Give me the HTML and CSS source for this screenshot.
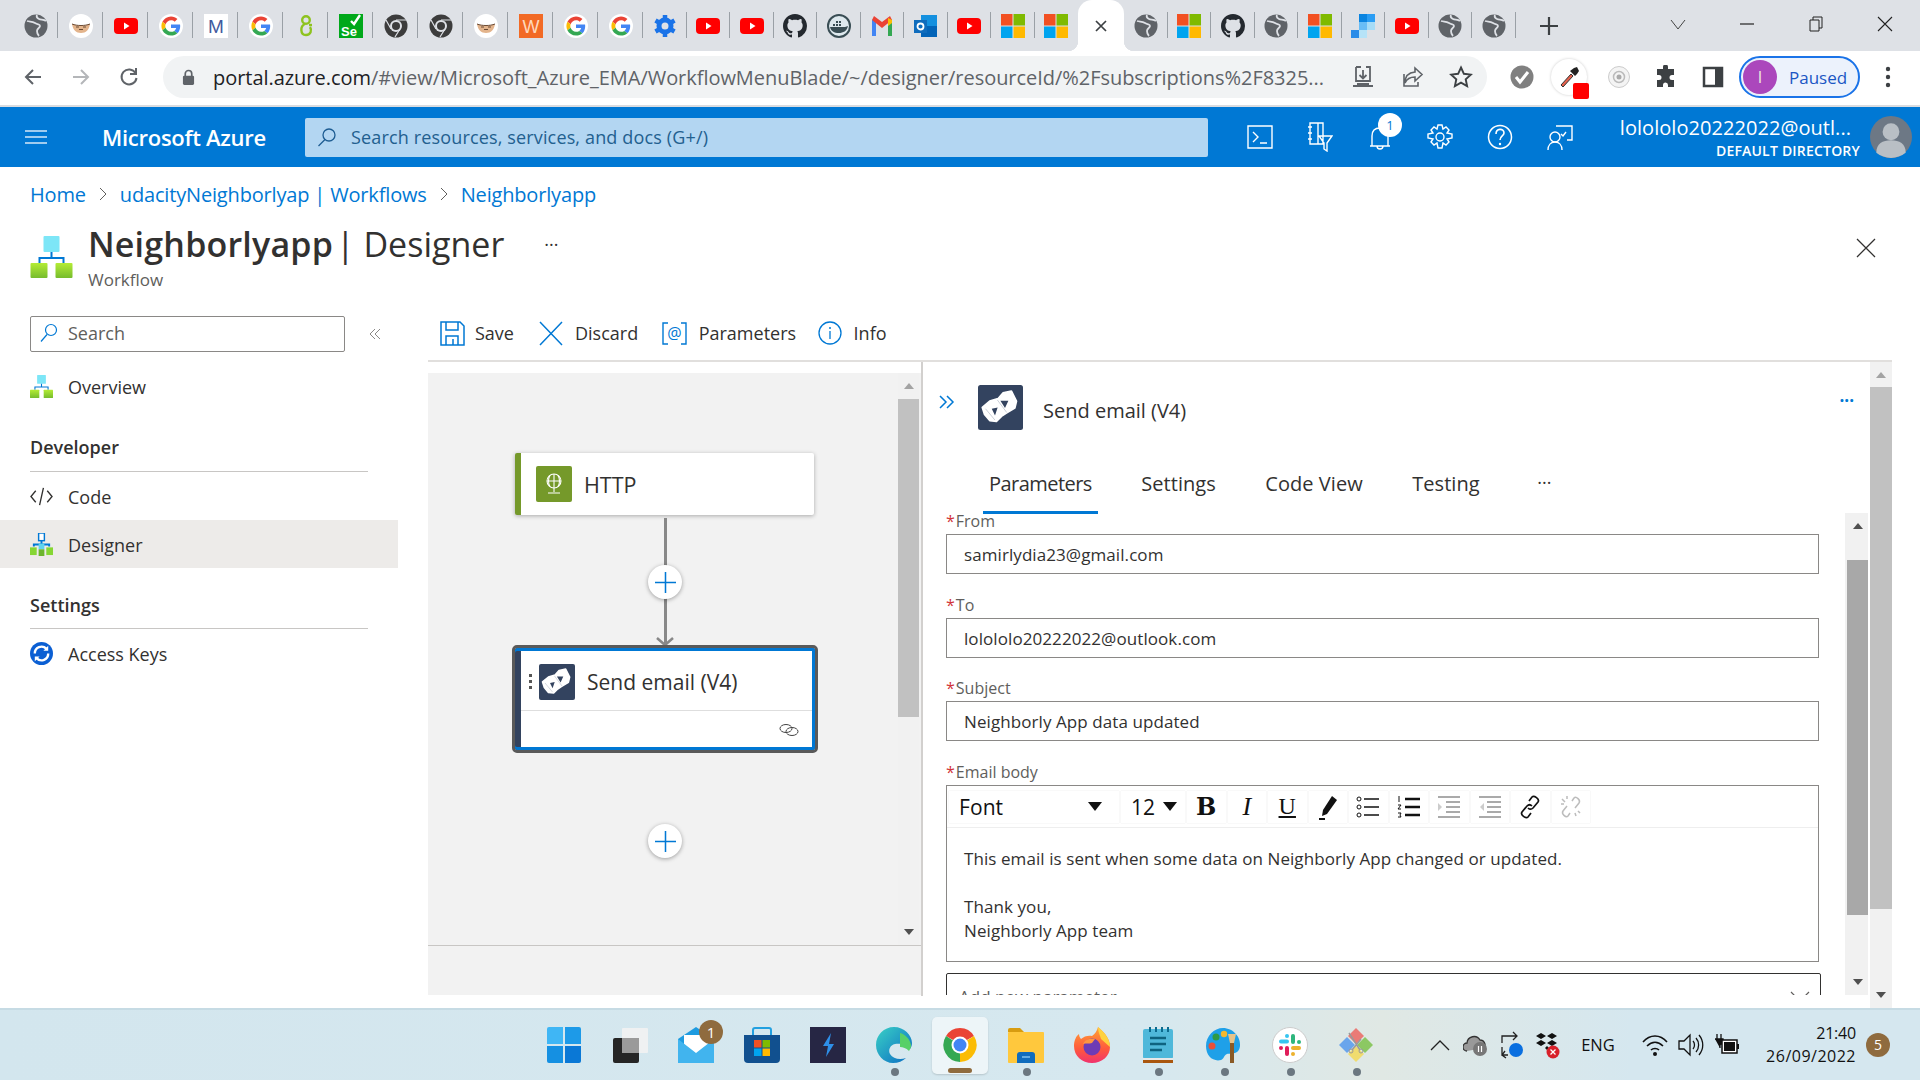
FILE: index.html
```html
<!DOCTYPE html>
<html lang="en">
<head>
  <meta charset="UTF-8">
  <title>Neighborlyapp | Designer - Microsoft Azure</title>
  <link rel="stylesheet" href="styles.css">
</head>
<body>
  <svg class="sprite" aria-hidden="true">
    <defs>
      <symbol id="globe" viewBox="0 0 24 24"><circle cx="12" cy="12" r="11.5" fill="#5f6368"/><path d="M3 7c3 1 5 0 8 2s5 1 5 3-3 2-3 5 1 4 2 5M13 1c-1 2 0 3 2 4s5 0 7 2" fill="none" stroke="#dee1e6" stroke-width="1.800"/></symbol>
      <symbol id="face" viewBox="0 0 24 24"><circle cx="12" cy="12" r="12" fill="#fff"/><path d="M3 10c5 2 13 2 18 0-1 6-4 9-9 9s-8-3-9-9z" fill="#e3b48c"/><path d="M3 10c5 2 13 2 18 0" fill="none" stroke="#6b4a33" stroke-width="1"/><path d="M7 13h3M14 13h3M10 15.500h4" stroke="#6b4a33" stroke-width="1"/></symbol>
      <symbol id="yt" viewBox="0 0 24 24"><rect y="4" width="24" height="16" rx="4" fill="#f00"/><path d="M10 8.500l5.500 3.500-5.500 3.500z" fill="#fff"/></symbol>
      <symbol id="google" viewBox="-6 -6 60 60"><circle cx="24" cy="24" r="30" fill="#fff"/><path fill="#EA4335" d="M24 9.500c3.540 0 6.710 1.220 9.210 3.600l6.850-6.850C35.900 2.380 30.470 0 24 0 14.620 0 6.510 5.380 2.560 13.220l7.980 6.190C12.430 13.720 17.740 9.500 24 9.500z"/><path fill="#4285F4" d="M46.980 24.550c0-1.570-.15-3.090-.38-4.550H24v9.020h12.940c-.58 2.960-2.260 5.480-4.780 7.180l7.730 6c4.510-4.180 7.090-10.360 7.090-17.650z"/><path fill="#FBBC05" d="M10.530 28.590c-.48-1.450-.76-2.990-.76-4.590s.27-3.140.76-4.590l-7.980-6.190C.92 16.460 0 20.120 0 24c0 3.880.92 7.540 2.560 10.780l7.970-6.190z"/><path fill="#34A853" d="M24 48c6.480 0 11.930-2.130 15.890-5.810l-7.730-6c-2.150 1.450-4.920 2.300-8.160 2.300-6.260 0-11.570-4.220-13.470-9.910l-7.980 6.190C6.510 42.620 14.620 48 24 48z"/></symbol>
      <symbol id="fav-m" viewBox="0 0 24 24"><rect width="24" height="24" fill="#fff"/><text x="12" y="19" text-anchor="middle" font-family="Liberation Sans" font-size="19" fill="#3f5a9e">M</text></symbol>
      <symbol id="leaf" viewBox="0 0 24 24"><g fill="none" stroke="#8ec31f" stroke-width="2.400"><circle cx="12" cy="6" r="3.800"/><path d="M11 10c-5 2-5 11 1 11 5 0 6-5 4-8"/><path d="M15 11h3"/></g></symbol>
      <symbol id="se" viewBox="0 0 24 24"><rect width="24" height="24" fill="#00a81a"/><path d="M12 7l3 3 6-9" fill="none" stroke="#fff" stroke-width="2.400"/><text x="2" y="22" font-family="Liberation Sans" font-weight="700" font-size="13" fill="#fff">Se</text></symbol>
      <symbol id="chrome-grey" viewBox="0 0 24 24"><circle cx="12" cy="12" r="11.500" fill="#3c3c3c"/><circle cx="12" cy="12" r="6" fill="#dee1e6"/><circle cx="12" cy="12" r="4" fill="#3c3c3c"/><path d="M12 6h10M7 15L2 6M16 15l-5 8" stroke="#dee1e6" stroke-width="1.200"/></symbol>
      <symbol id="fav-w" viewBox="0 0 24 24"><rect width="24" height="24" fill="#f26a25"/><text x="12" y="19" text-anchor="middle" font-family="Liberation Sans" font-size="18" fill="#ffd9bd">W</text></symbol>
      <symbol id="gear-blue" viewBox="0 0 24 24"><circle cx="12" cy="12" r="6" fill="none" stroke="#1a73e8" stroke-width="5"/><path d="M12 1v5M12 18v5M2.500 6.500l4.300 2.500M17.200 15l4.300 2.500M2.500 17.500L6.800 15M17.200 9l4.300-2.500" stroke="#1a73e8" stroke-width="4.500"/></symbol>
      <symbol id="github" viewBox="0 0 16 16"><path fill="#24292f" d="M8 0C3.580 0 0 3.580 0 8c0 3.540 2.290 6.530 5.470 7.590.4.070.55-.17.55-.38 0-.19-.01-.82-.01-1.490-2.010.37-2.530-.49-2.690-.94-.09-.23-.48-.94-.82-1.130-.28-.15-.68-.52-.01-.53.63-.01 1.080.58 1.230.82.72 1.210 1.870.87 2.330.66.070-.52.28-.87.51-1.070-1.780-.2-3.640-.89-3.640-3.950 0-.87.31-1.590.82-2.150-.08-.2-.36-1.020.08-2.120 0 0 .67-.21 2.200.82.64-.18 1.320-.27 2-.27.68 0 1.360.09 2 .27 1.530-1.040 2.200-.82 2.200-.82.44 1.100.16 1.920.08 2.120.51.56.82 1.270.82 2.150 0 3.070-1.870 3.750-3.650 3.950.29.25.54.73.54 1.480 0 1.070-.01 1.930-.01 2.200 0 .21.15.46.55.38A8.013 8.013 0 0016 8c0-4.420-3.580-8-8-8z"/></symbol>
      <symbol id="docker" viewBox="0 0 24 24"><circle cx="12" cy="12" r="11" fill="#dee9ee" stroke="#394d54" stroke-width="2"/><path d="M3 13h15c1 0 2-1 3-1-1 5-5 7-9 7-5 0-8-2-9-6z" fill="#394d54"/><path d="M6 10h2v2H6zM9 10h2v2H9zM12 10h2v2h-2zM9 7h2v2H9zM12 7h2v2h-2z" fill="#394d54"/></symbol>
      <symbol id="gmail" viewBox="0 0 24 24"><path d="M2 22V6l4-2v18z" fill="#4285f4"/><path d="M18 22V4l4 2v16z" fill="#34a853"/><path d="M2 6l10 8 10-8-2-4-8 6-8-6z" fill="#ea4335"/><path d="M18 4l4 2v3l-4 3z" fill="#fbbc05"/></symbol>
      <symbol id="outlook" viewBox="0 0 24 24"><rect x="7" y="1" width="16" height="22" fill="#1490df"/><path d="M7 12h16v11H7z" fill="#0364b8"/><rect x="0" y="6" width="13" height="13" fill="#0f6cbd"/><circle cx="6.500" cy="12.500" r="3" fill="none" stroke="#fff" stroke-width="1.800"/></symbol>
      <symbol id="ms" viewBox="0 0 24 24"><path d="M0 0h11.500v11.500H0z" fill="#f25022"/><path d="M12.500 0H24v11.500H12.500z" fill="#7fba00"/><path d="M0 12.500h11.500V24H0z" fill="#00a4ef"/><path d="M12.500 12.500H24V24H12.500z" fill="#ffb900"/></symbol>
      <symbol id="squares" viewBox="0 0 24 24"><path d="M8 0h8v8H8z" fill="#0a84e0"/><path d="M16 0h8v8h-8z" fill="#2a9df4"/><path d="M8 8h8v8H8z" fill="#68bdf6"/><path d="M16 8h8v8h-8z" fill="#a6dcf7"/><path d="M0 16h8v8H0z" fill="#2a8ce8"/><path d="M8 16h8v8H8z" fill="#b6e3f8"/></symbol>

      <symbol id="workflow" viewBox="0 0 42 42"><defs><linearGradient id="wf-g" x1="0" y1="0" x2="0" y2="1"><stop offset="0" stop-color="#b4ec36"/><stop offset="1" stop-color="#76bc2d"/></linearGradient></defs><rect x="13" y="0" width="16" height="16" rx="1" fill="#7de6f7"/><path d="M21 16v6M9 27v-5h24v5" fill="none" stroke="#0078d4" stroke-width="2"/><rect x="0" y="27" width="17" height="15" rx="1" fill="url(#wf-g)"/><rect x="25" y="27" width="17" height="15" rx="1" fill="url(#wf-g)"/></symbol>
      <symbol id="designer" viewBox="0 0 24 24"><rect x="9" y="0" width="6" height="8" fill="#fff" stroke="#0078d4" stroke-width="1.500"/><path d="M12 8v4M4 14v-2h16v2" fill="none" stroke="#0078d4" stroke-width="2"/><path d="M9 11h6v6H9z" fill="#5fd4ee"/><rect x="0" y="15" width="7" height="8" fill="#86d633"/><rect x="17" y="15" width="7" height="8" fill="#86d633"/><rect x="9" y="17" width="6" height="7" fill="#6cb52d"/></symbol>
      <symbol id="mail-logo" viewBox="0 0 36 36"><rect width="36" height="36" rx="2" fill="#33435f"/><path d="M3.500 17.900L9.400 13 16 11l4-4.600L26.700 5l4 8-1.300 5.400-6.700 4-4 2.600-4 4-5.300-.6-4.100-4.800z" fill="#fff" stroke="#fff" stroke-width="1.500" stroke-linejoin="round"/><path d="M11 19l2.600 5.300 2.100-6.400zM17.900 12.500l3.700 5.900 2.700-5.900z" fill="#33435f"/><path d="M6 19l7.500 9M15.500 12l7.500 10" stroke="#c3c9d2" stroke-width=".7" fill="none"/></symbol>

      <symbol id="win" viewBox="0 0 36 36"><path d="M1 2a2 2 0 012-2h14v17H1z" fill="#3fb6f5"/><path d="M19 0h14a2 2 0 012 2v15H19z" fill="#1d9ae8"/><path d="M1 19h16v17H3a2 2 0 01-2-2z" fill="#1590e2"/><path d="M19 19h16v15a2 2 0 01-2 2H19z" fill="#0a78d6"/></symbol>
      <symbol id="taskview" viewBox="0 0 36 36"><rect x="1" y="11" width="26" height="25" rx="2" fill="#252525"/><rect x="10" y="1" width="26" height="25" rx="1" fill="#f2f2f2" opacity=".9"/><rect x="10" y="11" width="17" height="15" fill="#9a9a9a"/></symbol>
      <symbol id="mail-task" viewBox="0 0 36 36"><path d="M0 12L18 0l18 12v24H0z" fill="#1d9be0"/><path d="M6 8h24v14l-12 7-12-7z" fill="#fff"/><path d="M0 12l18 14 18-14v24H0z" fill="#41b4ee"/></symbol>
      <symbol id="store" viewBox="0 0 36 36"><path d="M9 8V3a2 2 0 012-2h14a2 2 0 012 2v5" fill="none" stroke="#22a0e0" stroke-width="2"/><path d="M0 8h36v24a4 4 0 01-4 4H4a4 4 0 01-4-4z" fill="#11508f"/><path d="M10 13h7.500v7.500H10z" fill="#f25022"/><path d="M18.500 13H26v7.500h-7.500z" fill="#7fba00"/><path d="M10 21.500h7.500V29H10z" fill="#00a4ef"/><path d="M18.500 21.500H26V29h-7.500z" fill="#ffb900"/></symbol>
      <symbol id="bolt" viewBox="0 0 36 36"><rect width="36" height="36" fill="#262644"/><path d="M21 6l-8 13h5l-2 11 8-13h-5z" fill="#2e8fe8"/></symbol>
      <symbol id="edge" viewBox="0 0 36 36"><defs><linearGradient id="edge-g" x1="0" y1="0" x2="1" y2="1"><stop offset="0" stop-color="#3ad1c5"/><stop offset="1" stop-color="#0a6bc4"/></linearGradient></defs><path d="M18 0C8 0 0 8 0 18c0 10 8 18 17 18 5 0 10-2 13-5-6 2-13 1-16-4-2-4 0-9 5-10 6-1 12 1 15 5 1-2 2-3 2-6C36 8 28 0 18 0z" fill="url(#edge-g)"/><path d="M24 6c5 1 10 6 11 12 0 3-1 4-2 6-3-3-6-4-9-4z" fill="#57d068"/></symbol>
      <symbol id="chrome" viewBox="0 0 36 36"><path d="M18 18L4.100 10A16 16 0 0131.900 10z" fill="#ea4335" transform="translate(0 -1)"/><path d="M18 18L32 9A17 17 0 0118 35z" fill="#fbbc05"/><path d="M18 18L18 35A17 17 0 014 9z" fill="#34a853"/><circle cx="18" cy="18" r="8.500" fill="#fff"/><circle cx="18" cy="18" r="6.500" fill="#4285f4"/></symbol>
      <symbol id="folder" viewBox="0 0 36 36"><path d="M0 3a2 2 0 012-2h10l4 4h-16z" fill="#d89c10"/><rect y="5" width="36" height="31" rx="1" fill="#ffc83d"/><path d="M9 36v-8a3 3 0 013-3h12a3 3 0 013 3v8z" fill="#0f6cbd"/><path d="M14 30h8" stroke="#7fc1ef" stroke-width="1.500"/></symbol>
      <symbol id="firefox" viewBox="0 0 36 36"><defs><linearGradient id="ff-g" x1="0" y1="0" x2="0" y2="1"><stop offset="0" stop-color="#ffa436"/><stop offset=".6" stop-color="#ff5a3c"/><stop offset="1" stop-color="#f0336e"/></linearGradient></defs><path d="M24 0c7 6 12 12 12 20 0 9-8 16-18 16S0 29 0 19C0 14 2 9 5 7c0 2 1 4 2 5 3-3 8-4 11-3 3-2 5-5 6-9z" fill="url(#ff-g)"/><path d="M24 0c7 6 12 12 12 20l-9-8c-1-4-3-7-3-12z" fill="#ffd23f"/><circle cx="18" cy="20" r="8.500" fill="#6e3bb5"/><path d="M9 17c2-5 7-6 12-5l-3 4c-3 1-6 0-9 1z" fill="#ff9640"/></symbol>
      <symbol id="notes" viewBox="0 0 36 36"><rect x="3" y="2" width="30" height="30" rx="2" fill="#4fb8da"/><path d="M3 31h30v2H3z" fill="#e8e8e8"/><path d="M3 33h30v3H3z" fill="#a9570f"/><path d="M10 0v5M16 0v5M22 0v5M28 0v5" stroke="#0c6a8e" stroke-width="2"/><path d="M10 11h16M10 17h16M10 23h12" stroke="#0e6380" stroke-width="2.500"/></symbol>
      <symbol id="paint" viewBox="0 0 36 36"><path d="M17 1C8 1 0 9 0 19s7 16 15 14c3-1 3-5 6-6 4-1 12 1 13-8C35 10 27 1 17 1z" fill="#1fa0e8"/><circle cx="6" cy="19" r="3.500" fill="#e8503a"/><circle cx="10" cy="10" r="3.500" fill="#2e9a46"/><circle cx="18" cy="7" r="3.200" fill="#f5b82e"/><rect x="24" y="15" width="4" height="21" fill="#8a5a26"/><path d="M22 7h8l-2 9h-4z" fill="#e8c48a"/></symbol>
      <symbol id="slack" viewBox="0 0 36 36"><circle cx="18" cy="18" r="17.500" fill="#fff" stroke="#ccc"/><rect x="7" y="12.500" width="10" height="4" rx="2" fill="#36c5f0"/><rect x="13" y="7" width="4" height="4" rx="2" fill="#36c5f0"/><rect x="19" y="7" width="4" height="10" rx="2" fill="#2eb67d"/><rect x="25" y="13" width="4" height="4" rx="2" fill="#2eb67d"/><rect x="13" y="19" width="4" height="10" rx="2" fill="#e01e5a"/><rect x="7" y="19" width="4" height="4" rx="2" fill="#e01e5a"/><rect x="19" y="19" width="10" height="4" rx="2" fill="#ecb22e"/><rect x="19" y="25" width="4" height="4" rx="2" fill="#ecb22e"/></symbol>
      <symbol id="snip" viewBox="0 0 36 36"><path d="M18 1l8 8-8 8-8-8z" fill="#ea7b76"/><path d="M9 10l8 8-8 8-8-8z" fill="#6aa5ec"/><path d="M27 10l8 8-8 8-8-8z" fill="#8cc863"/><path d="M18 19l8 8-8 8-8-8z" fill="#f0dc6e"/><path d="M11 6l11 17M23 12L14 23" stroke="#9a9a9a" stroke-width="1.500"/><circle cx="23" cy="24" r="2" fill="none" stroke="#9a9a9a"/><circle cx="13" cy="24" r="2" fill="none" stroke="#9a9a9a"/></symbol>
    </defs>
  </svg>

  <div class="tabstrip">
    <div class="tab"><svg class="fav"><use href="#globe"/></svg></div>
    <div class="tab"><svg class="fav"><use href="#face"/></svg></div>
    <div class="tab"><svg class="fav"><use href="#yt"/></svg></div>
    <div class="tab"><svg class="fav"><use href="#google"/></svg></div>
    <div class="tab"><svg class="fav"><use href="#fav-m"/></svg></div>
    <div class="tab"><svg class="fav"><use href="#google"/></svg></div>
    <div class="tab"><svg class="fav"><use href="#leaf"/></svg></div>
    <div class="tab"><svg class="fav"><use href="#se"/></svg></div>
    <div class="tab"><svg class="fav"><use href="#chrome-grey"/></svg></div>
    <div class="tab"><svg class="fav"><use href="#chrome-grey"/></svg></div>
    <div class="tab"><svg class="fav"><use href="#face"/></svg></div>
    <div class="tab"><svg class="fav"><use href="#fav-w"/></svg></div>
    <div class="tab"><svg class="fav"><use href="#google"/></svg></div>
    <div class="tab"><svg class="fav"><use href="#google"/></svg></div>
    <div class="tab"><svg class="fav"><use href="#gear-blue"/></svg></div>
    <div class="tab"><svg class="fav"><use href="#yt"/></svg></div>
    <div class="tab"><svg class="fav"><use href="#yt"/></svg></div>
    <div class="tab"><svg class="fav"><use href="#github"/></svg></div>
    <div class="tab"><svg class="fav"><use href="#docker"/></svg></div>
    <div class="tab"><svg class="fav"><use href="#gmail"/></svg></div>
    <div class="tab"><svg class="fav"><use href="#outlook"/></svg></div>
    <div class="tab"><svg class="fav"><use href="#yt"/></svg></div>
    <div class="tab"><svg class="fav"><use href="#ms"/></svg></div>
    <div class="tab tab-last"><svg class="fav"><use href="#ms"/></svg></div>
    <div class="tab-active"><svg width="14" height="14" viewBox="0 0 14 14"><path d="M2 2l10 10M12 2L2 12" stroke="#3c4043" stroke-width="1.700"/></svg></div>
    <div class="tab"><svg class="fav"><use href="#globe"/></svg></div>
    <div class="tab"><svg class="fav"><use href="#ms"/></svg></div>
    <div class="tab"><svg class="fav"><use href="#github"/></svg></div>
    <div class="tab"><svg class="fav"><use href="#globe"/></svg></div>
    <div class="tab"><svg class="fav"><use href="#ms"/></svg></div>
    <div class="tab"><svg class="fav"><use href="#squares"/></svg></div>
    <div class="tab"><svg class="fav"><use href="#yt"/></svg></div>
    <div class="tab"><svg class="fav"><use href="#globe"/></svg></div>
    <div class="tab"><svg class="fav"><use href="#globe"/></svg></div>
    <div class="newtab"><svg width="20" height="20" viewBox="0 0 20 20"><path d="M10 1v18M1 10h18" stroke="#3c4043" stroke-width="2.200"/></svg></div>
    <div class="winctl">
      <svg width="16" height="16" viewBox="0 0 16 16"><path d="M1 4l7 9 7-9" fill="none" stroke="#444" stroke-width="1"/></svg>
      <svg width="16" height="16" viewBox="0 0 16 16"><path d="M1 8h14" stroke="#222" stroke-width="1.200"/></svg>
      <svg width="16" height="16" viewBox="0 0 16 16"><path d="M2 4h9v11H2zM5 4V1h9v11h-3" fill="none" stroke="#222" stroke-width="1"/></svg>
      <svg width="16" height="16" viewBox="0 0 16 16"><path d="M1 1l14 14M15 1L1 15" stroke="#222" stroke-width="1.100"/></svg>
    </div>
  </div>

  <div class="addressbar">
    <svg class="nav" viewBox="0 0 20 20"><path d="M18 10H3M10 3l-7 7 7 7" fill="none" stroke="#5f6368" stroke-width="2"/></svg>
    <svg class="nav" viewBox="0 0 20 20"><path d="M2 10h15M10 3l7 7-7 7" fill="none" stroke="#b4b6b9" stroke-width="2"/></svg>
    <svg class="nav" viewBox="0 0 20 20"><path d="M16.500 6A7.500 7.500 0 1017.500 11M17 1v6h-6" fill="none" stroke="#5f6368" stroke-width="2"/></svg>
    <div class="omnibox">
      <svg class="lock" viewBox="0 0 14 18"><path d="M3.500 8V5a3.500 3.500 0 017 0v3" fill="none" stroke="#5f6368" stroke-width="1.800"/><rect x="1" y="7" width="12" height="10" rx="1.500" fill="#5f6368"/></svg>
      <span class="url"><b>portal.azure.com</b>/#view/Microsoft_Azure_EMA/WorkflowMenuBlade/~/designer/resourceId/%2Fsubscriptions%2F8325...</span>
      <svg class="omni-ico" viewBox="0 0 24 24"><path d="M5 2h5M15 2h4v14H5V2M12 5v8M8.500 10l3.500 3.500 3.500-3.500M2 21h20M6 19h12" fill="none" stroke="#5f6368" stroke-width="1.800"/></svg>
      <svg class="omni-ico" viewBox="0 0 24 24"><path d="M15 3l7 6.500L15 16v-4c-5 0-8 1.500-10 6 0-7 4-10.500 10-11zM4 9v12h14v-4" fill="none" stroke="#5f6368" stroke-width="1.600"/></svg>
      <svg class="omni-ico" viewBox="0 0 24 24"><path d="M12 2.500l2.900 6.300 6.900.8-5.100 4.700 1.400 6.800-6.100-3.400-6.100 3.400 1.400-6.800-5.100-4.700 6.900-.8z" fill="none" stroke="#3c4043" stroke-width="1.900"/></svg>
    </div>
    <svg class="ext" viewBox="0 0 24 24"><circle cx="12" cy="12" r="11.500" fill="#808080"/><path d="M6 12l4 5 8-10" fill="none" stroke="#fff" stroke-width="3"/></svg>
    <div class="ext ext-drop">
      <svg width="24" height="24" viewBox="0 0 24 24"><path d="M4 20l10-11 2 2L6 22z" fill="#e5604c" stroke="#333"/><path d="M13 6l5 5 2-2 2-3-2-4-3 1z" fill="#222"/></svg>
      <span class="drop-red"></span>
    </div>
    <svg class="ext" viewBox="0 0 24 24"><circle cx="12" cy="12" r="10.500" fill="#f4f4f4" stroke="#ccc"/><circle cx="12" cy="12" r="5.500" fill="none" stroke="#bbb" stroke-width="1.500"/><circle cx="12" cy="12" r="2.500" fill="#aaa"/></svg>
    <svg class="ext" viewBox="0 0 24 24"><path d="M9 2a2.500 2.500 0 015 0v2h6v6h-2a2.500 2.500 0 000 5h2v7h-6v-2a2.500 2.500 0 00-5 0v2H3v-7h2a2.500 2.500 0 000-5H3V4h6z" fill="#3c4043"/></svg>
    <svg class="ext" viewBox="0 0 24 24"><path d="M3 3h18v18H3z" fill="none" stroke="#3c4043" stroke-width="2.500"/><path d="M14 3h7v18h-7z" fill="#3c4043"/></svg>
    <div class="chip"><span class="chip-avatar">I</span><span>Paused</span></div>
    <svg class="more" viewBox="0 0 6 24"><circle cx="3" cy="4" r="2.200" fill="#3c4043"/><circle cx="3" cy="12" r="2.200" fill="#3c4043"/><circle cx="3" cy="20" r="2.200" fill="#3c4043"/></svg>
  </div>

  <header class="azure-bar">
    <div class="burger"><svg width="22" height="16" viewBox="0 0 22 16"><path d="M0 2h22M0 8h22M0 14h22" stroke="#d5e8f7" stroke-width="1.600"/></svg></div>
    <div class="brand">Microsoft Azure</div>
    <div class="global-search">
      <svg width="20" height="20" viewBox="0 0 20 20"><circle cx="12" cy="8" r="6" fill="none" stroke="#1d5c92" stroke-width="1.300"/><path d="M8 12.500L1.500 19" stroke="#1d5c92" stroke-width="1.300"/></svg>
      <span>Search resources, services, and docs (G+/)</span>
    </div>
    <div class="bar-ico"><svg width="26" height="26" viewBox="0 0 26 26"><path d="M1 2h24v22H1z" fill="none" stroke="#fff" stroke-width="1.400"/><path d="M6 8l5 5-5 5M13 19h7" fill="none" stroke="#fff" stroke-width="1.400"/></svg></div>
    <div class="bar-ico"><svg width="26" height="30" viewBox="0 0 26 30"><path d="M3 1h13v21H3zM1 5h4M1 11h4M1 17h4M11 1v21M12 14h13l-5 7v8l-3-2v-6z" fill="none" stroke="#fff" stroke-width="1.400"/></svg></div>
    <div class="bar-ico"><svg width="22" height="30" viewBox="0 0 22 30"><path d="M3 24V14C3 9 6 6 11 6s8 3 8 8v10zM1 24h20M8 24a3 3 0 006 0" fill="none" stroke="#fff" stroke-width="1.400"/></svg><span class="bell-badge">1</span></div>
    <div class="bar-ico"><svg width="26" height="26" viewBox="0 0 26 26"><circle cx="13" cy="13" r="4" fill="none" stroke="#fff" stroke-width="1.400"/><path d="M11 1h4l1 4 3-2 3 3-2 3 5 1v4l-5 1 2 3-3 3-3-2-1 5h-4l-1-5-3 2-3-3 2-3-5-1v-4l5-1-2-3 3-3 3 2z" fill="none" stroke="#fff" stroke-width="1.400"/></svg></div>
    <div class="bar-ico"><svg width="26" height="26" viewBox="0 0 26 26"><circle cx="13" cy="13" r="11.500" fill="none" stroke="#fff" stroke-width="1.500"/><path d="M9 10c0-6 8-6 8-1 0 3-4 3-4 7" fill="none" stroke="#fff" stroke-width="1.600"/><circle cx="13" cy="20" r="1.200" fill="#fff"/></svg></div>
    <div class="bar-ico"><svg width="26" height="28" viewBox="0 0 26 28"><path d="M9 3h16v14h-5M14 11l2 2 3-4" fill="none" stroke="#fff" stroke-width="1.400"/><circle cx="8" cy="14" r="5" fill="none" stroke="#fff" stroke-width="1.400"/><path d="M1 27c0-5 3-8 7-8s7 3 7 8" fill="none" stroke="#fff" stroke-width="1.400"/></svg></div>
    <div class="account">
      <div class="account-mail">lolololo20222022@outl...</div>
      <div class="account-dir">DEFAULT DIRECTORY</div>
    </div>
    <svg class="avatar" viewBox="0 0 40 40"><circle cx="20" cy="20" r="20" fill="#6d7885"/><circle cx="20" cy="15" r="8" fill="#b9bfc5"/><path d="M6 35c0-9 6-12 14-12s14 3 14 12c-4 3-9 5-14 5S10 38 6 35z" fill="#b9bfc5"/></svg>
  </header>

  <main class="portal">
    <nav class="crumbs">
      <a>Home</a><svg class="crumb-sep" viewBox="0 0 10 14"><path d="M2 1l6 6-6 6" fill="none" stroke="#605e5c"/></svg>
      <a>udacityNeighborlyap | Workflows</a><svg class="crumb-sep" viewBox="0 0 10 14"><path d="M2 1l6 6-6 6" fill="none" stroke="#605e5c"/></svg>
      <a>Neighborlyapp</a>
    </nav>

    <div class="blade-head">
      <svg class="blade-icon"><use href="#workflow"/></svg>
      <div class="blade-titles">
        <h1><strong>Neighborlyapp</strong> <span>| Designer</span></h1>
        <div class="blade-sub">Workflow</div>
      </div>
      <span class="blade-more">···</span>
      <svg class="blade-close" viewBox="0 0 20 20"><path d="M1 1l18 18M19 1L1 19" stroke="#323130" stroke-width="1.300"/></svg>
    </div>

    <div class="blade-body">
      <aside class="sidebar">
        <div class="side-search-row">
          <div class="side-search">
            <svg width="18" height="20" viewBox="0 0 18 20"><circle cx="11" cy="7" r="5.500" fill="none" stroke="#0078d4" stroke-width="1.200"/><path d="M7 11.500L1 18.500" stroke="#0078d4" stroke-width="1.200"/></svg>
            <span>Search</span>
          </div>
          <svg class="collapse" viewBox="0 0 14 14"><path d="M7 2L2 7l5 5M12 2L7 7l5 5" fill="none" stroke="#8a8886"/></svg>
        </div>
        <a class="side-item side-first"><svg class="side-ico"><use href="#workflow"/></svg>Overview</a>
        <div class="side-group">Developer</div>
        <a class="side-item"><svg class="side-ico" viewBox="0 0 24 24"><path d="M6 6l-5 6 5 6M18 6l5 6-5 6M14 3l-4 18" fill="none" stroke="#323130" stroke-width="1.400"/></svg>Code</a>
        <a class="side-item side-on"><svg class="side-ico"><use href="#designer"/></svg>Designer</a>
        <div class="side-group side-group2">Settings</div>
        <a class="side-item"><svg class="side-ico" viewBox="0 0 24 24"><circle cx="12" cy="12" r="12" fill="#0b5fd3"/><path d="M5 12a7 7 0 0112-5M19 12a7 7 0 01-12 5" fill="none" stroke="#fff" stroke-width="2.500"/><path d="M14 9h5V4zM10 15H5v5z" fill="#fff"/></svg>Access Keys</a>
      </aside>

      <section class="workspace">
        <div class="commands">
          <a class="cmd cmd-save"><svg width="25" height="25" viewBox="0 0 25 25"><path d="M1 1h19l4 4v19H1zM6 1v8h12V1M6 24v-9h12v9M13 18v6" fill="none" stroke="#0078d4" stroke-width="1.500"/></svg>Save</a>
          <a class="cmd"><svg width="24" height="25" viewBox="0 0 24 25"><path d="M1 1l22 23M23 1L1 24" stroke="#0078d4" stroke-width="1.500"/></svg>Discard</a>
          <a class="cmd cmd-params"><svg width="25" height="25" viewBox="0 0 25 25"><path d="M6 2H1v21h5M19 2h5v21h-5" fill="none" stroke="#0078d4" stroke-width="1.400"/><text x="12.500" y="18" text-anchor="middle" font-size="16" font-family="Open Sans" fill="#0078d4">@</text></svg>Parameters</a>
          <a class="cmd"><svg width="24" height="24" viewBox="0 0 24 24"><circle cx="12" cy="12" r="11" fill="none" stroke="#0078d4" stroke-width="1.300"/><path d="M12 10v8" stroke="#0078d4" stroke-width="1.300"/><circle cx="12" cy="7" r="1" fill="#0078d4"/></svg>Info</a>
        </div>

        <div class="split">
          <div class="canvas">
            <div class="canvas-view">
              <div class="diagram">
                <div class="node node-http">
                  <span class="node-logo"><svg width="22" height="24" viewBox="0 0 22 24"><circle cx="11" cy="9" r="7" fill="none" stroke="#fff" stroke-width="1.100"/><path d="M4 9h14M11 2v14M7 3.500c-2 3-2 8 0 11M15 3.500c2 3 2 8 0 11M11 16v4M5 21h12" fill="none" stroke="#fff" stroke-width="1.100"/></svg></span>
                  <span>HTTP</span>
                </div>
                <div class="wire wire-a"></div>
                <div class="wire wire-b"></div>
                <svg class="wire-head" viewBox="0 0 18 10"><path d="M1 1l8 7 8-7" fill="none" stroke="#888" stroke-width="2.500"/></svg>
                <div class="add add-a"><svg viewBox="0 0 22 22"><path d="M11 0v22M0 11h22" stroke="#0078d4" stroke-width="1.600"/></svg></div>
                <div class="node-mail">
                  <div class="node-mail-top">
                    <span class="grip"><i></i><i></i><i></i></span>
                    <svg class="node-mail-logo"><use href="#mail-logo"/></svg>
                    <span>Send email (V4)</span>
                  </div>
                  <div class="node-mail-foot"><svg width="20" height="14" viewBox="0 0 20 14"><ellipse cx="7" cy="5.500" rx="6" ry="4" fill="none" stroke="#444" stroke-width="1"/><ellipse cx="13" cy="8.500" rx="6" ry="4" fill="none" stroke="#444" stroke-width="1"/></svg></div>
                </div>
                <div class="add add-b"><svg viewBox="0 0 22 22"><path d="M11 0v22M0 11h22" stroke="#0078d4" stroke-width="1.600"/></svg></div>
              </div>
              <div class="vscroll canvas-scroll">
                <span class="sb-up"></span><span class="sb-thumb"></span><span class="sb-fill"></span><span class="sb-down"></span>
              </div>
            </div>
          </div>

          <div class="panel">
            <div class="panel-main">
              <div class="panel-head">
                <svg class="panel-collapse" viewBox="0 0 18 14"><path d="M2 1l6 6-6 6M9 1l6 6-6 6" fill="none" stroke="#0078d4" stroke-width="1.500"/></svg>
                <svg class="panel-logo"><use href="#mail-logo"/></svg>
                <span class="panel-title">Send email (V4)</span>
                <span class="panel-more">···</span>
              </div>
              <div class="panel-tabs">
                <span class="ptab ptab-on">Parameters</span>
                <span class="ptab">Settings</span>
                <span class="ptab">Code View</span>
                <span class="ptab">Testing</span>
                <span class="ptab-more">···</span>
              </div>
              <div class="form-wrap">
                <div class="form">
                  <label class="lbl"><em>*</em>From</label>
                  <div class="input">samirlydia23@gmail.com</div>
                  <label class="lbl"><em>*</em>To</label>
                  <div class="input">lolololo20222022@outlook.com</div>
                  <label class="lbl"><em>*</em>Subject</label>
                  <div class="input">Neighborly App data updated</div>
                  <label class="lbl"><em>*</em>Email body</label>
                  <div class="editor">
                    <div class="editor-tools">
                      <span class="tb tb-font">Font<i class="caret"></i></span>
                      <span class="tb tb-size">12<i class="caret"></i></span>
                      <span class="tb tb-b">B</span>
                      <span class="tb tb-i">I</span>
                      <span class="tb tb-u">U</span>
                      <span class="tb"><svg width="22" height="26" viewBox="0 0 22 26"><path d="M15 2l5 4-10 14-5 2 1-6z" fill="#111"/><path d="M2 25h6" stroke="#111" stroke-width="2"/></svg></span>
                      <span class="tb"><svg width="26" height="26" viewBox="0 0 26 26"><path d="M9 5h15M9 13h15M9 21h15" stroke="#111" stroke-width="1.500"/><circle cx="4" cy="5" r="2" fill="none" stroke="#111"/><circle cx="4" cy="13" r="2" fill="none" stroke="#111"/><circle cx="4" cy="21" r="2" fill="none" stroke="#111"/></svg></span>
                      <span class="tb"><svg width="26" height="26" viewBox="0 0 26 26"><path d="M9 5h15M9 13h15M9 21h15" stroke="#111" stroke-width="2.400"/><path d="M3 2v6M2 11h3l-3 4h3M2 19h3l-1 2 1 2H2" fill="none" stroke="#111"/></svg></span>
                      <span class="tb"><svg width="26" height="26" viewBox="0 0 26 26"><path d="M2 3h22M10 8h14M10 13h14M10 18h14M2 23h22" stroke="#aaa" stroke-width="1.800"/><path d="M2 9l4 4-4 4z" fill="#ccc"/></svg></span>
                      <span class="tb"><svg width="26" height="26" viewBox="0 0 26 26"><path d="M2 3h22M10 8h14M10 13h14M10 18h14M2 23h22" stroke="#aaa" stroke-width="1.800"/><path d="M7 9l-4 4 4 4z" fill="#ccc"/></svg></span>
                      <span class="tb"><svg width="26" height="26" viewBox="0 0 26 26"><path d="M12 7l3-4c2-2 8 2 6 5l-5 6c-2 2-4 1-5 0M14 19l-3 4c-2 2-8-2-6-5l5-6c2-2 4-1 5 0" fill="none" stroke="#111" stroke-width="1.700"/></svg></span>
                      <span class="tb tb-off"><svg width="26" height="26" viewBox="0 0 26 26"><path d="M14 7l2-3c2-2 7 2 5 5l-4 5M12 19l-2 3c-2 2-7-2-5-5l4-5M4 5l3 3M3 10h3M9 2v3M20 17l2 2M18 22l-1-3" fill="none" stroke="#b5b5b5" stroke-width="1.500"/></svg></span>
                    </div>
                    <div class="editor-text">
                      <p>This email is sent when some data on Neighborly App changed or updated.</p>
                      <p>&nbsp;</p>
                      <p>Thank you,</p>
                      <p>Neighborly App team</p>
                    </div>
                  </div>
                  <div class="add-param">
                    <span>Add new parameter</span>
                    <svg width="20" height="12" viewBox="0 0 20 12"><path d="M1 1l9 9 9-9" fill="none" stroke="#605e5c" stroke-width="1.200"/></svg>
                  </div>
                </div>
                <div class="vscroll form-scroll">
                  <span class="sb-up"></span><span class="sb-thumb"></span><span class="sb-fill"></span><span class="sb-down"></span>
                </div>
              </div>
            </div>
            <div class="vscroll panel-scroll">
              <span class="sb-up"></span><span class="sb-thumb"></span><span class="sb-fill"></span><span class="sb-down"></span>
            </div>
          </div>
        </div>
      </section>
    </div>
  </main>

  <footer class="taskbar">
    <div class="apps">
      <div class="app"><svg class="app-ico"><use href="#win"/></svg></div>
      <div class="app"><svg class="app-ico"><use href="#taskview"/></svg></div>
      <div class="app"><svg class="app-ico"><use href="#mail-task"/></svg><span class="app-badge">1</span></div>
      <div class="app"><svg class="app-ico"><use href="#store"/></svg></div>
      <div class="app"><svg class="app-ico"><use href="#bolt"/></svg></div>
      <div class="app app-run"><svg class="app-ico"><use href="#edge"/></svg></div>
      <div class="app app-on"><svg class="app-ico"><use href="#chrome"/></svg></div>
      <div class="app app-run"><svg class="app-ico"><use href="#folder"/></svg></div>
      <div class="app"><svg class="app-ico"><use href="#firefox"/></svg></div>
      <div class="app app-run"><svg class="app-ico"><use href="#notes"/></svg></div>
      <div class="app app-run"><svg class="app-ico"><use href="#paint"/></svg></div>
      <div class="app app-run"><svg class="app-ico"><use href="#slack"/></svg></div>
      <div class="app app-run"><svg class="app-ico"><use href="#snip"/></svg></div>
    </div>
    <div class="tray">
      <span class="tray-cell"><svg width="20" height="12" viewBox="0 0 20 12"><path d="M1 11l9-9 9 9" fill="none" stroke="#222" stroke-width="1.300"/></svg></span>
      <span class="tray-cell"><svg width="26" height="24" viewBox="0 0 26 24"><path d="M4 18a4 4 0 010-8 7 7 0 0113-3 5 5 0 014 8" fill="#999" stroke="#333" stroke-width="1.300"/><circle cx="17" cy="16" r="7" fill="#777"/><path d="M15.500 13v6M18.500 13v6" stroke="#fff" stroke-width="1.200"/></svg></span>
      <span class="tray-cell"><svg width="26" height="28" viewBox="0 0 26 28"><path d="M3 12V5h15M14 1l4 4-4 4M3 16v8h6M6 20l-3 4 4 3" fill="none" stroke="#222" stroke-width="1.300"/><circle cx="17" cy="19" r="7" fill="#0a6fe0"/></svg></span>
      <span class="tray-cell"><svg width="26" height="28" viewBox="0 0 26 28"><path d="M6 2l5 3-5 3-5-3zM17 2l5 3-5 3-5-3zM6 9l5 3-5 3-5-3zM17 9l5 3-5 3-5-3zM10 17l2-2 2 2-2 2z" fill="#111"/><circle cx="18" cy="21" r="6.500" fill="#d8202a"/><path d="M15.500 18.500l5 5M20.500 18.500l-5 5" stroke="#fff" stroke-width="1.300"/></svg></span>
      <span class="tray-lang">ENG</span>
      <span class="tray-cell tray-gap"><svg width="26" height="24" viewBox="0 0 26 24"><path d="M1 9c7-8 17-8 24 0M5 13c5-5 11-5 16 0M9 17c2-2 6-2 8 0" fill="none" stroke="#111" stroke-width="1.600"/><circle cx="13" cy="21" r="2" fill="#111"/></svg></span>
      <span class="tray-cell"><svg width="26" height="24" viewBox="0 0 26 24"><path d="M1 8h5l6-6v20l-6-6H1z" fill="none" stroke="#111" stroke-width="1.300"/><path d="M15 8c2 2 2 6 0 8M18 5c3.500 4 3.500 10 0 14M21 2c5 6 5 14 0 20" fill="none" stroke="#111" stroke-width="1.300"/></svg></span>
      <span class="tray-cell"><svg width="26" height="24" viewBox="0 0 26 24"><path d="M3 1v5M7 1v5M1 6h8v4l-3 2v3" fill="#111" stroke="#111" stroke-width="1.300"/><rect x="8" y="7" width="15" height="13" fill="#fff" stroke="#111" stroke-width="1.500"/><rect x="10" y="9" width="11" height="9" fill="#111"/><path d="M23 11h2v5h-2" fill="#111"/></svg></span>
      <div class="clock"><div>21:40</div><div class="clock-date">26/09/2022</div></div>
      <span class="notif">5</span>
    </div>
  </footer>
</body>
</html>
```

FILE: styles.css
```css
* {
  box-sizing: border-box;
}

html, body {
  margin: 0;
  padding: 0;
}

body {
  width: 1920px;
  height: 1080px;
  overflow: hidden;
  display: flex;
  flex-direction: column;
  background-color: #fff;
  color: #323130;
  font-family: "Open Sans", "Noto Sans", sans-serif;
}

.sprite {
  position: absolute;
  width: 0;
  height: 0;
}

svg {
  display: block;
  flex: none;
}

/* browser tabs */
.tabstrip {
  height: 51px;
  flex: none;
  display: flex;
  padding-left: 13px;
  background-color: #dee1e6;
}

.tab {
  width: 45px;
  height: 51px;
  display: flex;
  align-items: center;
  justify-content: center;
  position: relative;
}

.tab:nth-child(n+15) {
  width: 43.5px;
}

.tab::after {
  content: "";
  position: absolute;
  right: 0;
  top: 12px;
  height: 26px;
  width: 1px;
  background-color: #9aa0a6;
}

.tab-last::after {
  display: none;
}

.fav {
  width: 24px;
  height: 24px;
}

.tab-active {
  width: 46px;
  height: 51px;
  position: relative;
  display: flex;
  align-items: center;
  justify-content: center;
  background-color: #fff;
  border-radius: 14px 14px 0 0;
}

.tab-active::before, .tab-active::after {
  content: "";
  position: absolute;
  bottom: 0;
  width: 10px;
  height: 10px;
}

.tab-active::before {
  left: -10px;
  background: radial-gradient(circle at 0 0, transparent 10px, #fff 10.5px);
}

.tab-active::after {
  right: -10px;
  background: radial-gradient(circle at 100% 0, transparent 10px, #fff 10.5px);
}

.newtab {
  width: 44px;
  margin-left: 11.5px;
  display: flex;
  align-items: center;
  justify-content: center;
}

.winctl {
  margin-left: 99px;
  display: flex;
  align-items: center;
  gap: 53px;
  padding-bottom: 4px;
}

/* address bar */
.addressbar {
  height: 56px;
  flex: none;
  display: flex;
  align-items: center;
  padding: 0 0 2px 23px;
  background-color: #fff;
  border-bottom: 2px solid #dadce0;
}

.nav {
  width: 20px;
  height: 20px;
  margin-right: 28px;
}

.omnibox {
  width: 1324px;
  height: 42px;
  margin-left: -4px;
  display: flex;
  align-items: center;
  padding-left: 19px;
  border-radius: 21px;
  background-color: #f1f3f4;
}

.lock {
  width: 13px;
  height: 17px;
}

.url {
  width: 1118px;
  margin-left: 18px;
  white-space: nowrap;
  overflow: hidden;
  font-size: 20px;
  letter-spacing: -0.04px;
  color: #5f6368;
}

.url b {
  font-weight: 400;
  color: #202124;
}

.omni-ico {
  width: 24px;
  height: 24px;
  margin-left: 25px;
}

.url + .omni-ico {
  margin-left: 20px;
}

.ext {
  width: 24px;
  height: 24px;
  margin-left: 23px;
}

.addressbar > .ext:first-of-type {
  margin-left: 15px;
}

.ext-drop {
  position: relative;
  width: 36px;
  height: 36px;
  margin-left: 17px;
  display: flex;
  align-items: center;
  justify-content: center;
  border-radius: 50%;
  background-color: #fff;
  box-shadow: 0 0 3px #ccc;
}

.ext-drop + .ext {
  margin-left: 20px;
}

.drop-red {
  position: absolute;
  right: -2px;
  bottom: -4px;
  width: 16px;
  height: 16px;
  border-radius: 2px;
  background-color: #f00;
}

.chip {
  width: 121px;
  height: 42px;
  margin-left: 14px;
  display: flex;
  align-items: center;
  gap: 12px;
  padding-left: 2px;
  border: 2px solid #1a73e8;
  border-radius: 21px;
  background-color: #ecf2fc;
  color: #1a56c4;
  font-size: 17px;
}

.chip-avatar {
  width: 34px;
  height: 34px;
  flex: none;
  display: flex;
  align-items: center;
  justify-content: center;
  border-radius: 50%;
  background-color: #ab47bc;
  color: #eed;
  font-size: 16px;
}

.more {
  width: 6px;
  height: 24px;
  margin-left: 25px;
}

/* azure header */
.azure-bar {
  height: 60px;
  flex: none;
  display: flex;
  align-items: center;
  background-color: #0078d4;
  color: #fff;
}

.burger {
  width: 72px;
  display: flex;
  justify-content: center;
}

.brand {
  width: 233px;
  padding-left: 30px;
  font-size: 22px;
  font-weight: 600;
  letter-spacing: -0.27px;
  white-space: nowrap;
}

.global-search {
  width: 903px;
  height: 39px;
  display: flex;
  align-items: center;
  gap: 14px;
  padding-left: 12px;
  border-radius: 2px;
  background-color: #b3d6f2;
  color: #22608f;
  font-size: 18px;
  letter-spacing: 0.15px;
}

.bar-ico {
  width: 60px;
  height: 60px;
  position: relative;
  display: flex;
  align-items: center;
  justify-content: center;
}

.global-search + .bar-ico {
  margin-left: 22px;
}

.bell-badge {
  position: absolute;
  top: 6px;
  left: 28px;
  width: 24px;
  height: 24px;
  display: flex;
  align-items: center;
  justify-content: center;
  border-radius: 50%;
  background-color: #fff;
  color: #0078d4;
  font-size: 13px;
}

.account {
  width: 270px;
  padding-top: 2px;
  text-align: right;
  white-space: nowrap;
}

.account-mail {
  padding-right: 9px;
  font-size: 20px;
  line-height: 26px;
  letter-spacing: 0.05px;
}

.account-dir {
  font-size: 14px;
  line-height: 20px;
  font-weight: 600;
  letter-spacing: 0.2px;
}

.avatar {
  width: 44px;
  height: 42px;
  margin-left: 9px;
}

/* blade */
.portal {
  height: 841px;
  flex: none;
  overflow: hidden;
  display: flex;
  flex-direction: column;
}

.crumbs {
  height: 51px;
  flex: none;
  display: flex;
  align-items: center;
  padding: 3px 0 0 30px;
  color: #0078d4;
  font-size: 20px;
  letter-spacing: -0.17px;
  white-space: nowrap;
}

.crumb-sep {
  width: 10px;
  height: 14px;
  margin: 0 12px;
}

.blade-head {
  height: 98px;
  flex: none;
  position: relative;
  display: flex;
  padding-left: 30px;
}

.blade-icon {
  width: 43px;
  height: 42px;
  margin-top: 18px;
}

.blade-titles {
  margin-left: 15px;
}

h1 {
  margin: 4px 0 0;
  font-size: 34px;
  line-height: 44px;
  font-weight: 400;
  white-space: nowrap;
}

h1 strong {
  font-weight: 600;
  letter-spacing: 0.2px;
}

h1 span {
  margin-left: -6px;
}

.blade-sub {
  margin-top: 4px;
  font-size: 17px;
  line-height: 20px;
  color: #605e5c;
}

.blade-more {
  margin: 14px 0 0 40px;
  font-size: 18px;
  color: #323130;
}

.blade-close {
  position: absolute;
  top: 20px;
  right: 44px;
  width: 20px;
  height: 20px;
}

.blade-body {
  flex: 1;
  display: flex;
  min-height: 0;
}

/* left menu */
.sidebar {
  width: 428px;
  flex: none;
  font-size: 18px;
}

.side-search-row {
  display: flex;
  align-items: center;
  padding-left: 30px;
}

.side-search {
  width: 315px;
  height: 36px;
  display: flex;
  align-items: center;
  gap: 10px;
  padding: 0 0 2px 9px;
  border: 1px solid #8a8886;
  border-radius: 2px;
  color: #605e5c;
}

.collapse {
  width: 14px;
  height: 14px;
  margin-left: 23px;
}

.side-item {
  width: 398px;
  height: 48px;
  display: flex;
  align-items: center;
  gap: 15px;
  padding: 1px 0 0 30px;
}

.side-first {
  margin-top: 10px;
}

.side-ico {
  width: 23px;
  height: 23px;
}

.side-on {
  background-color: #edebe9;
}

.side-group {
  width: 338px;
  height: 50px;
  margin: 12px 0 0 30px;
  padding-top: 13px;
  border-bottom: 1px solid #c8c6c4;
  font-size: 18px;
  line-height: 24px;
  font-weight: 600;
}

.side-group2 {
  height: 49px;
}

/* right side */
.workspace {
  flex: 1;
  display: flex;
  flex-direction: column;
  min-width: 0;
  padding-right: 28px;
}

.commands {
  height: 46px;
  flex: none;
  display: flex;
  padding: 5px 0 0 12px;
  border-bottom: 2px solid #e1dfdd;
  font-size: 18px;
}

.cmd {
  height: 24px;
  display: flex;
  align-items: center;
  gap: 11.5px;
  margin-right: 24px;
  white-space: nowrap;
}

.cmd-save {
  gap: 10px;
  margin-right: 25.5px;
}

.cmd-params {
  margin-right: 22px;
}

.split {
  flex: 1;
  display: flex;
  min-height: 0;
}

.canvas {
  width: 495px;
  height: 634px;
  flex: none;
  padding-top: 11px;
  border-right: 2px solid #d2d0ce;
}

.canvas-view {
  height: 573px;
  display: flex;
  background-color: #f2f2f2;
  border-bottom: 1px solid #c8c6c4;
}

.canvas::after {
  content: "";
  display: block;
  height: 49px;
  background-color: #f2f2f2;
}

.diagram {
  flex: 1;
  position: relative;
}

/* nodes on the diagram, placed by their canvas coordinates */
.node {
  position: absolute;
  left: 87px;
  top: 80px;
  width: 299px;
  height: 62px;
  display: flex;
  align-items: center;
  gap: 12px;
  padding-left: 15px;
  border-left: 6px solid #75992a;
  border-radius: 2px;
  background-color: #fff;
  box-shadow: 0 1px 4px rgba(0, 0, 0, 0.3);
  font-size: 21.5px;
}

.node-logo {
  width: 36px;
  height: 36px;
  display: flex;
  align-items: center;
  justify-content: center;
  border-radius: 2px;
  background-color: #75992a;
}

.wire {
  position: absolute;
  left: 236px;
  width: 3px;
  background-color: #888;
}

.wire-a {
  top: 145px;
  height: 48px;
}

.wire-b {
  top: 225px;
  height: 45px;
}

.wire-head {
  position: absolute;
  left: 228px;
  top: 264px;
  width: 18px;
  height: 10px;
}

.add {
  position: absolute;
  left: 220px;
  width: 34px;
  height: 34px;
  display: flex;
  align-items: center;
  justify-content: center;
  border-radius: 50%;
  background-color: #fff;
  box-shadow: 0 1px 4px rgba(0, 0, 0, 0.35);
}

.add svg {
  width: 21px;
  height: 21px;
}

.add-a {
  top: 192px;
}

.add-b {
  top: 451px;
}

.node-mail {
  position: absolute;
  left: 84px;
  top: 272px;
  width: 306px;
  height: 108px;
  border: 3px solid #5a5a5a;
  border-radius: 5px;
  background-color: #fff;
  box-shadow: inset 0 3px 0 #0078d4, inset -3px 0 0 #0078d4, inset 0 -3px 0 #0078d4, inset 6px 0 0 #33435f;
  font-size: 21px;
}

.node-mail-top {
  height: 63px;
  display: flex;
  align-items: center;
  gap: 12px;
  padding: 5px 0 0 8px;
  margin-left: 6px;
  margin-right: 3px;
  border-bottom: 1px solid #dedede;
}

.grip {
  width: 3px;
  display: flex;
  flex-direction: column;
  gap: 3px;
  margin-right: -5px;
}

.grip i {
  display: block;
  width: 3px;
  height: 3px;
  background-color: #555;
}

.node-mail-logo {
  width: 36px;
  height: 36px;
}

.node-mail-foot {
  display: flex;
  justify-content: flex-end;
  padding: 12px 16px 0 0;
}

/* scrollbars */
.vscroll {
  flex: none;
  display: flex;
  flex-direction: column;
  align-items: center;
  background-color: #f1f1f1;
}

.sb-up, .sb-down {
  height: 26px;
  flex: none;
  display: flex;
  align-items: center;
}

.sb-up::before, .sb-down::before {
  content: "";
  border-left: 5px solid transparent;
  border-right: 5px solid transparent;
}

.sb-up::before {
  border-bottom: 6px solid #a3a3a3;
}

.sb-down::before {
  border-top: 6px solid #505050;
}

.sb-thumb {
  width: 100%;
  background-color: #c1c1c1;
}

.sb-fill {
  flex: 1;
}

.canvas-scroll {
  width: 21px;
  margin-right: 2px;
}

.canvas-scroll .sb-thumb {
  height: 318px;
}

.panel-scroll {
  width: 22px;
}

.panel-scroll .sb-up {
  height: 25px;
}

.panel-scroll .sb-thumb {
  height: 522px;
}

.form-scroll {
  width: 25px;
  margin-left: 24px;
}

.form-scroll .sb-up {
  height: 47px;
  align-items: flex-start;
  padding-top: 10px;
}

.form-scroll .sb-up::before {
  border-bottom-color: #505050;
}

.form-scroll .sb-thumb {
  width: 21px;
  height: 355px;
  background-color: #a8a8a8;
}

/* connector panel */
.panel {
  flex: 1;
  min-width: 0;
  display: flex;
  height: 646px;
}

.panel-main {
  flex: 1;
  min-width: 0;
  display: flex;
  flex-direction: column;
  margin-right: 2px;
}

.panel-head {
  height: 91px;
  flex: none;
  display: flex;
  padding-left: 15px;
  position: relative;
}

.panel-collapse {
  width: 18px;
  height: 14px;
  margin-top: 33px;
}

.panel-logo {
  width: 45px;
  height: 45px;
  margin: 23px 0 0 22px;
}

.panel-title {
  margin: 35px 0 0 20px;
  font-size: 20px;
  line-height: 28px;
}

.panel-more {
  position: absolute;
  top: 27px;
  right: 14px;
  color: #0078d4;
  font-size: 17px;
  font-weight: 700;
}

.panel-tabs {
  height: 60px;
  flex: none;
  display: flex;
  padding-left: 60px;
  font-size: 20px;
}

.ptab {
  height: 61px;
  flex: none;
  padding: 16px 6px 0;
  line-height: 30px;
  margin-right: 37.5px;
  letter-spacing: 0.05px;
  white-space: nowrap;
}

.ptab-on {
  border-bottom: 3px solid #0078d4;
  letter-spacing: -0.55px;
}

.ptab-more {
  padding-top: 17px;
  margin-left: 14px;
  font-size: 18px;
}

/* only the bottom edge clips, the first label sits over the tab underline */
.form-wrap {
  height: 482px;
  flex: none;
  display: flex;
  align-items: stretch;
  clip-path: inset(-6px 0 0 0);
}

.form {
  width: 898px;
  flex: none;
  padding-left: 23px;
}

.lbl {
  display: block;
  height: 16px;
  margin-bottom: 5px;
  font-size: 16px;
  line-height: 16px;
  color: #605e5c;
}

.lbl em {
  font-style: normal;
  color: #d13438;
  margin-right: 1px;
}

.input {
  width: 873px;
  height: 40px;
  margin-bottom: 22.5px;
  padding-left: 17px;
  border: 1px solid #8a8886;
  font-size: 17px;
  line-height: 40px;
  white-space: nowrap;
  letter-spacing: 0.08px;
}

.editor {
  width: 873px;
  height: 177px;
  border: 1px solid #8a8886;
  font-size: 17px;
  letter-spacing: 0.08px;
}

.editor-tools {
  height: 42px;
  display: flex;
  gap: 2px;
  padding: 5px 0 0 2px;
  border-bottom: 1px solid #eee;
}

.tb {
  width: 38.5px;
  height: 32px;
  display: flex;
  align-items: center;
  justify-content: center;
  box-shadow: 0 0 1px #ddd;
  color: #111;
}

.tb-font {
  width: 170px;
  justify-content: space-between;
  padding: 0 17px 0 10px;
  font-size: 21px;
}

.tb-size {
  width: 64px;
  justify-content: space-between;
  padding: 0 8px 0 10px;
  font-size: 21px;
}

.caret {
  border-left: 7.5px solid transparent;
  border-right: 7.5px solid transparent;
  border-top: 9px solid #111;
}

.tb-b {
  font-family: "DejaVu Serif", serif;
  font-weight: 700;
  font-size: 24px;
}

.tb-i {
  font-family: "Liberation Serif", serif;
  font-style: italic;
  font-size: 26px;
}

.tb-u {
  font-family: "Liberation Serif", serif;
  text-decoration: underline;
  font-size: 24px;
}

.tb-off {
  opacity: 0.9;
}

.editor-text {
  padding: 19px 0 0 17px;
}

.editor-text p {
  margin: 0;
  line-height: 24px;
  white-space: nowrap;
}

.add-param {
  width: 875px;
  height: 40px;
  margin-top: 11px;
  display: flex;
  align-items: center;
  justify-content: space-between;
  padding: 8px 10px 0 12px;
  border: 1px solid #323130;
  border-radius: 2px;
  font-size: 17px;
  color: #605e5c;
}

/* windows taskbar */
.taskbar {
  height: 72px;
  flex: none;
  display: flex;
  background: linear-gradient(90deg, #d3e6ee 0%, #d6e8ef 60%, #e0e8e4 72%, #d5e7ef 85%);
  border-top: 2px solid #c6dbe4;
}

.apps {
  display: flex;
  margin-left: 531px;
}

.app {
  width: 66px;
  height: 70px;
  position: relative;
  display: flex;
  align-items: center;
  justify-content: center;
  padding-bottom: 1px;
}

.app-ico {
  width: 36px;
  height: 36px;
}

.app-badge {
  position: absolute;
  top: 10px;
  right: 6px;
  width: 24px;
  height: 24px;
  display: flex;
  align-items: center;
  justify-content: center;
  border-radius: 50%;
  background-color: #8f6b3e;
  color: #fff;
  font-size: 15px;
}

.app-run::after {
  content: "";
  position: absolute;
  left: 30px;
  top: 58px;
  width: 8px;
  height: 8px;
  border-radius: 50%;
  background-color: #6b7780;
}

.app-on::before {
  content: "";
  position: absolute;
  left: 5px;
  top: 7px;
  width: 56px;
  height: 57px;
  border-radius: 5px;
  background-color: #edf5f8;
  box-shadow: 0 1px 2px rgba(0, 0, 0, 0.15);
}

.app-on .app-ico {
  position: relative;
}

.app-on::after {
  content: "";
  position: absolute;
  left: 18px;
  top: 58px;
  width: 24px;
  height: 5px;
  margin-left: 3px;
  border-radius: 3px;
  background-color: #8f6b3e;
}

.tray {
  display: flex;
  align-items: center;
  margin-left: 33px;
  padding-bottom: 1px;
  color: #111;
}

.tray-cell {
  width: 36px;
  display: flex;
  justify-content: center;
}

.tray-lang {
  width: 64px;
  text-align: center;
  font-size: 16.5px;
}

.tray-gap {
  margin-left: 7px;
}

.clock {
  width: 111px;
  text-align: right;
  font-size: 16px;
  line-height: 23px;
  letter-spacing: -0.2px;
}

.clock-date {
  letter-spacing: 0.5px;
}

.notif {
  width: 24px;
  height: 24px;
  margin-left: 10px;
  display: flex;
  align-items: center;
  justify-content: center;
  border-radius: 50%;
  background-color: #8f6b3e;
  color: #fff;
  font-size: 14px;
}
```
